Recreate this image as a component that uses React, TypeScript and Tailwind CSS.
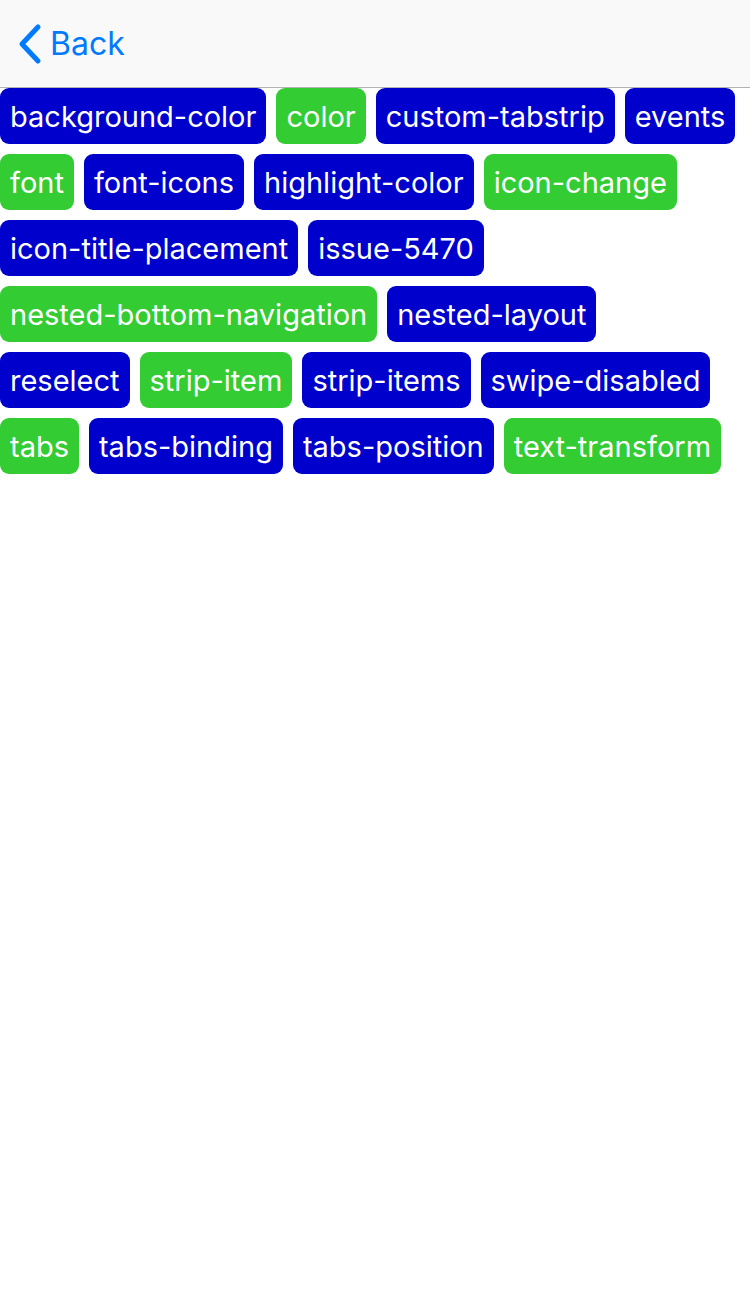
import React from "react";

type Item = { label: string; green?: boolean };

const ROWS: Item[][] = [
  [{ label: "background-color" }, { label: "color", green: true }, { label: "custom-tabstrip" }, { label: "events" }],
  [{ label: "font", green: true }, { label: "font-icons" }, { label: "highlight-color" }, { label: "icon-change", green: true }],
  [{ label: "icon-title-placement" }, { label: "issue-5470" }],
  [{ label: "nested-bottom-navigation", green: true }, { label: "nested-layout" }],
  [{ label: "reselect" }, { label: "strip-item", green: true }, { label: "strip-items" }, { label: "swipe-disabled" }],
  [{ label: "tabs", green: true }, { label: "tabs-binding" }, { label: "tabs-position" }, { label: "text-transform", green: true }],
];

function ChevronLeft() {
  return (
    <svg width="26" height="42" viewBox="0 0 26 42" fill="none">
      <path d="M22 4 L6 21 L22 38" stroke="#007aff" strokeWidth="5" strokeLinecap="round" strokeLinejoin="round" />
    </svg>
  );
}

export default function App() {
  return (
    <div className="min-h-[1294px] w-[750px] bg-white" style={{ fontFamily: "Inter, 'Noto Sans', sans-serif" }}>
      {/* nav bar */}
      <div className="flex h-[88px] items-center border-b border-[#b2b2b2] bg-[#f9f9f9] pl-[16px]">
        <button className="flex items-center gap-[8px] text-[#007aff]">
          <ChevronLeft />
          <span className="text-[32px] leading-none">Back</span>
        </button>
      </div>

      {/* example links */}
      <div className="flex flex-col gap-[10px]">
        {ROWS.map((row, i) => (
          <div key={i} className="flex gap-[10px]">
            {row.map((it) => (
              <button
                key={it.label}
                className={
                  "flex h-[56px] items-center rounded-[9px] px-[10px] pt-[2px] text-[29px] text-white " +
                  (it.green ? "bg-[#33cc33]" : "bg-[#0000cc]")
                }
              >
                {it.label}
              </button>
            ))}
          </div>
        ))}
      </div>
    </div>
  );
}
